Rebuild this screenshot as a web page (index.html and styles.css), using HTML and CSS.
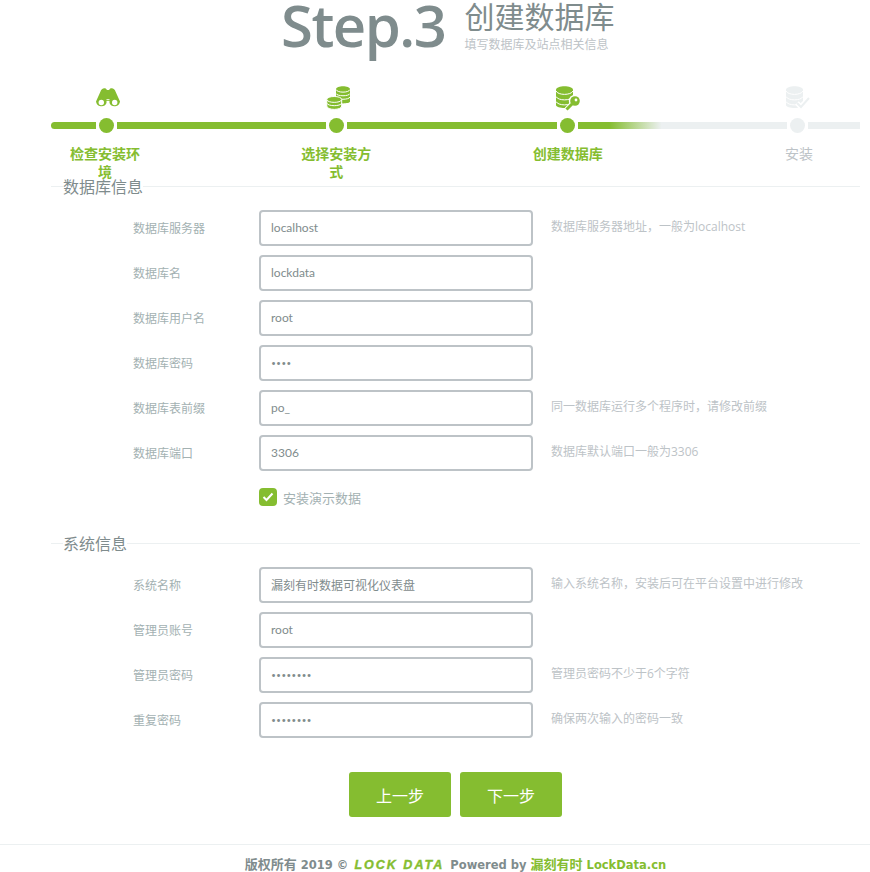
FILE: index.html
```html
<!DOCTYPE html>
<html lang="zh-CN">
<head>
<meta charset="utf-8">
<title>Step.3 创建数据库</title>
<link rel="stylesheet" href="styles.css">
</head>
<body>
<header class="head">
  <div class="head-step">Step.3</div>
  <div class="head-text">
    <div class="head-title">创建数据库</div>
    <div class="head-sub">填写数据库及站点相关信息</div>
  </div>
</header>

<section class="stepper">
  <div class="icons">
    <div class="icon-cell">
      <svg class="icon" width="24" height="24" viewBox="0 0 24 24"><path class="fill-green" d="M4.500 5.500C5 3 8 1.500 10 2.800L11 4H13L14 2.800C16 1.500 19 3 19.500 5.500L24 15.500A5.500 5.500 0 0 1 13.500 17V15H10.500V17A5.500 5.500 0 0 1 0 15.500Z"/><circle class="hole" cx="5.300" cy="16.500" r="2.700"/><circle class="hole" cx="18.700" cy="16.500" r="2.700"/><rect class="hole" x="10.500" y="13.200" width="3" height="1"/></svg>
    </div>
    <div class="icon-cell">
      <svg class="icon" width="24" height="24" viewBox="0 0 24 24"><path class="fill-green" d="M10 3.200V15.500C10 18 24 18 24 15.500V3.200C24 -0.800 10 -0.800 10 3.200Z"/><path class="stripe" d="M10 3.500C11 7 23 7 24 3.500M10 7.500C11 10.500 23 10.500 24 7.500M10 11C11 14 23 14 24 11"/><path class="fill-green stroke-white" d="M0.800 13.500V20C0.800 24.500 15.700 24.500 15.700 20V13.500C15.700 9.500 0.800 9.500 0.800 13.500Z"/><path class="stripe" d="M0.800 13.800C2 17.200 14.500 17.200 15.700 13.800M0.800 17.200C2 20.500 14.500 20.500 15.700 17.200"/></svg>
    </div>
    <div class="icon-cell">
      <svg class="icon" width="24" height="24" viewBox="0 0 24 24"><path class="fill-green" d="M0 4V19C0 23 17 23 17 19V4C17 -1 0 -1 0 4Z"/><path class="stripe" d="M0 5C2 9.500 15 9.500 17 5M0 10.500C2 15 15 15 17 10.500M0 15.500C2 20 15 20 17 15.500"/><circle class="hole" cx="19" cy="15" r="6.200"/><path class="key-gap" d="M16 18L10.500 23.500"/><path class="key-bar" d="M16 18L10.500 23.500"/><circle class="fill-green" cx="19" cy="15" r="4.800"/><circle class="hole" cx="20" cy="14" r="1.400"/></svg>
    </div>
    <div class="icon-cell">
      <svg class="icon" width="24" height="24" viewBox="0 0 24 24"><path class="fill-pale" d="M0 4V19C0 23 17 23 17 19V4C17 -1 0 -1 0 4Z"/><path class="stripe" d="M0 5C2 9.500 15 9.500 17 5M0 10.500C2 15 15 15 17 10.500M0 15.500C2 20 15 20 17 15.500"/><path class="check-gap" d="M11 17L15 21L23 12"/><path class="stroke-pale" d="M11 17L15 21L23 12"/></svg>
    </div>
  </div>

  <div class="track">
    <span class="seg seg-first"></span><span class="dot"></span>
    <span class="seg seg-mid"></span><span class="dot"></span>
    <span class="seg seg-mid"></span><span class="dot"></span>
    <span class="seg seg-mid seg-fade"></span><span class="dot dot-off"></span>
    <span class="seg seg-last"></span>
  </div>

  <div class="labels">
    <div class="label-cell"><span class="label-text">检查安装环境</span></div>
    <div class="label-cell"><span class="label-text">选择安装方式</span></div>
    <div class="label-cell"><span class="label-text">创建数据库</span></div>
    <div class="label-cell label-off"><span class="label-text">安装</span></div>
  </div>
</section>

<form class="form">
  <div class="legend">数据库信息</div>
  <div class="rows">
    <div class="row"><label class="row-label">数据库服务器</label><input class="field" type="text" value="localhost"><span class="hint">数据库服务器地址，一般为localhost</span></div>
    <div class="row"><label class="row-label">数据库名</label><input class="field" type="text" value="lockdata"></div>
    <div class="row"><label class="row-label">数据库用户名</label><input class="field" type="text" value="root"></div>
    <div class="row"><label class="row-label">数据库密码</label><input class="field field-secret" type="password" value="root"></div>
    <div class="row"><label class="row-label">数据库表前缀</label><input class="field" type="text" value="po_"><span class="hint">同一数据库运行多个程序时，请修改前缀</span></div>
    <div class="row"><label class="row-label">数据库端口</label><input class="field" type="text" value="3306"><span class="hint">数据库默认端口一般为3306</span></div>
    <div class="check-row">
      <span class="check-box"><svg width="12" height="10" viewBox="0 0 12 10"><path class="check-mark" d="M1.500 5L4.500 8L10.500 1.500"/></svg></span>
      <span class="check-text">安装演示数据</span>
    </div>
  </div>

  <div class="legend legend-second">系统信息</div>
  <div class="rows">
    <div class="row"><label class="row-label">系统名称</label><input class="field" type="text" value="漏刻有时数据可视化仪表盘"><span class="hint">输入系统名称，安装后可在平台设置中进行修改</span></div>
    <div class="row"><label class="row-label">管理员账号</label><input class="field" type="text" value="root"></div>
    <div class="row"><label class="row-label">管理员密码</label><input class="field field-secret" type="password" value="lockdata"><span class="hint">管理员密码不少于6个字符</span></div>
    <div class="row"><label class="row-label">重复密码</label><input class="field field-secret" type="password" value="lockdata"><span class="hint">确保两次输入的密码一致</span></div>
  </div>

  <div class="actions">
    <button class="btn" type="button">上一步</button>
    <button class="btn" type="button">下一步</button>
  </div>
</form>

<footer class="foot">
  <span class="foot-cjk">版权所有</span> 2019 © <span class="foot-logo">LOCK DATA</span> Powered by <span class="foot-link"><span class="foot-cjk">漏刻有时</span> LockData.cn</span>
</footer>
</body>
</html>
```

FILE: styles.css
```css
* { box-sizing: border-box; }
html, body { margin: 0; padding: 0; background: #fff; overflow: hidden; }
body {
  width: 870px;
  height: 872px;
  font-family: "Open Sans", "Noto Sans CJK SC", sans-serif;
  color: #7f8c8d;
}
.head {
  display: flex;
  padding-left: 281px;
  height: 86px;
}
.head-step {
  font-family: "Open Sans", sans-serif;
  font-size: 58px;
  font-weight: 600;
  line-height: 50px;
  letter-spacing: -1.5px;
  color: #7f8c8d;
}
.head-text { margin-left: 19px; }
.head-title {
  font-family: "Noto Sans CJK SC", sans-serif;
  font-size: 30px;
  line-height: 30px;
  color: #7f8c8d;
}
.head-sub {
  font-family: "Noto Sans CJK SC", sans-serif;
  font-size: 12px;
  line-height: 18px;
  margin-top: 5px;
  color: #bdc3c7;
}
.icons, .labels {
  display: flex;
  justify-content: space-between;
  margin-left: 51px;
  width: 801px;
}
.icon-cell, .label-cell {
  width: 110px;
  display: flex;
  justify-content: center;
}
.icon { display: block; margin-left: 3px; overflow: visible; }
.fill-green { fill: #85bd30; }
.fill-pale { fill: #ecf0f1; }
.hole { fill: #fff; }
.stripe { fill: none; stroke: #fff; stroke-width: 1; }
.stroke-white { stroke: #fff; stroke-width: 1; }
.key-gap { fill: none; stroke: #fff; stroke-width: 5; }
.key-bar { fill: none; stroke: #85bd30; stroke-width: 3; }
.check-gap { fill: none; stroke: #fff; stroke-width: 5; }
.stroke-pale { fill: none; stroke: #ecf0f1; stroke-width: 2; }
.track {
  display: flex;
  align-items: center;
  gap: 3px;
  margin: 8px 0 0 51px;
  width: 809px;
  height: 15px;
}
.seg { height: 7px; background: #85bd30; }
.seg-first { width: 45px; border-radius: 4px 0 0 4px; }
.seg-mid { flex: 1; }
.seg-fade { background: linear-gradient(to right, #85bd30 0, #85bd30 15%, #ecf0f1 40%); }
.seg-last { width: 52px; background: #ecf0f1; }
.dot { width: 15px; height: 15px; border-radius: 50%; background: #85bd30; }
.dot-off { background: #ecf0f1; }
.labels { margin: 11px 0 0 50px; width: 804px; height: 36px; }
.label-text {
  display: block;
  width: 72px;
  text-align: center;
  font-family: "Noto Sans CJK SC", sans-serif;
  font-size: 14px;
  font-weight: 700;
  line-height: 18px;
  color: #85bd30;
}
.label-off .label-text { color: #bdc3c7; font-weight: 400; }
.form { padding: 0 10px 0 51px; margin-top: -4px; }
.legend {
  display: flex;
  align-items: center;
  font-family: "Noto Sans CJK SC", sans-serif;
  font-size: 16px;
  line-height: 20px;
  color: #7f8c8d;
}
.legend::before { content: ""; width: 12px; height: 1px; background: #ecf0f1; }
.legend::after { content: ""; flex: 1; height: 1px; background: #ecf0f1; }
.legend-second { margin-top: 27px; }
.rows { padding: 14px 0 0 82px; }
.row {
  display: flex;
  align-items: center;
  height: 36px;
  margin-bottom: 9px;
}
.row-label {
  width: 126px;
  padding-bottom: 2px;
  font-family: "Noto Sans CJK SC", sans-serif;
  font-size: 12px;
  color: #a3b1b2;
}
.field {
  width: 274px;
  height: 36px;
  border: 2px solid #bdc3c7;
  border-radius: 4px;
  padding: 0 10px 2px;
  font-family: "Lato", "Noto Sans CJK SC", sans-serif;
  font-size: 12px;
  color: #7f8c8d;
  background: #fff;
  outline: none;
}
.field-secret { font-family: "Open Sans", sans-serif; font-size: 13.5px; padding-bottom: 0; }
.hint {
  margin-left: 18px;
  padding-bottom: 4px;
  font-family: "Open Sans", "Noto Sans CJK SC", sans-serif;
  font-size: 12px;
  color: #bdc3c7;
}
.check-row {
  display: flex;
  align-items: center;
  padding-left: 126px;
  height: 18px;
  margin-top: 17px;
}
.check-box {
  width: 18px;
  height: 18px;
  border-radius: 4px;
  background: #85bd30;
  display: flex;
  align-items: center;
  justify-content: center;
}
.check-mark { fill: none; stroke: #fff; stroke-width: 2; }
.check-text {
  margin-left: 6px;
  font-family: "Noto Sans CJK SC", sans-serif;
  font-size: 13px;
  color: #a3b1b2;
}
.actions {
  display: flex;
  gap: 9px;
  justify-content: center;
  margin-top: 34px;
  width: 809px;
}
.btn {
  width: 102px;
  height: 45px;
  border: 0;
  border-radius: 3px;
  background: #85bd30;
  color: #fff;
  font-family: "Noto Sans CJK SC", sans-serif;
  font-size: 16px;
}
.foot {
  margin-top: 27px;
  border-top: 1px solid #ecf0f1;
  text-align: center;
  padding: 11px 0 0 41px;
  font-family: "DejaVu Sans", "Noto Sans CJK SC", sans-serif;
  font-size: 11.5px;
  font-weight: 700;
  line-height: 18px;
  color: #7f8c8d;
  white-space: nowrap;
}
.foot-cjk { font-size: 13px; }
.foot-logo {
  font-family: "Liberation Sans", sans-serif;
  font-style: italic;
  font-weight: 700;
  color: #85bd30;
  display: inline-block;
  width: 94px;
  letter-spacing: 2px;
  font-size: 12.5px;
  -webkit-text-stroke: 0.4px #85bd30;
}
.foot-link { color: #85bd30; }
```
